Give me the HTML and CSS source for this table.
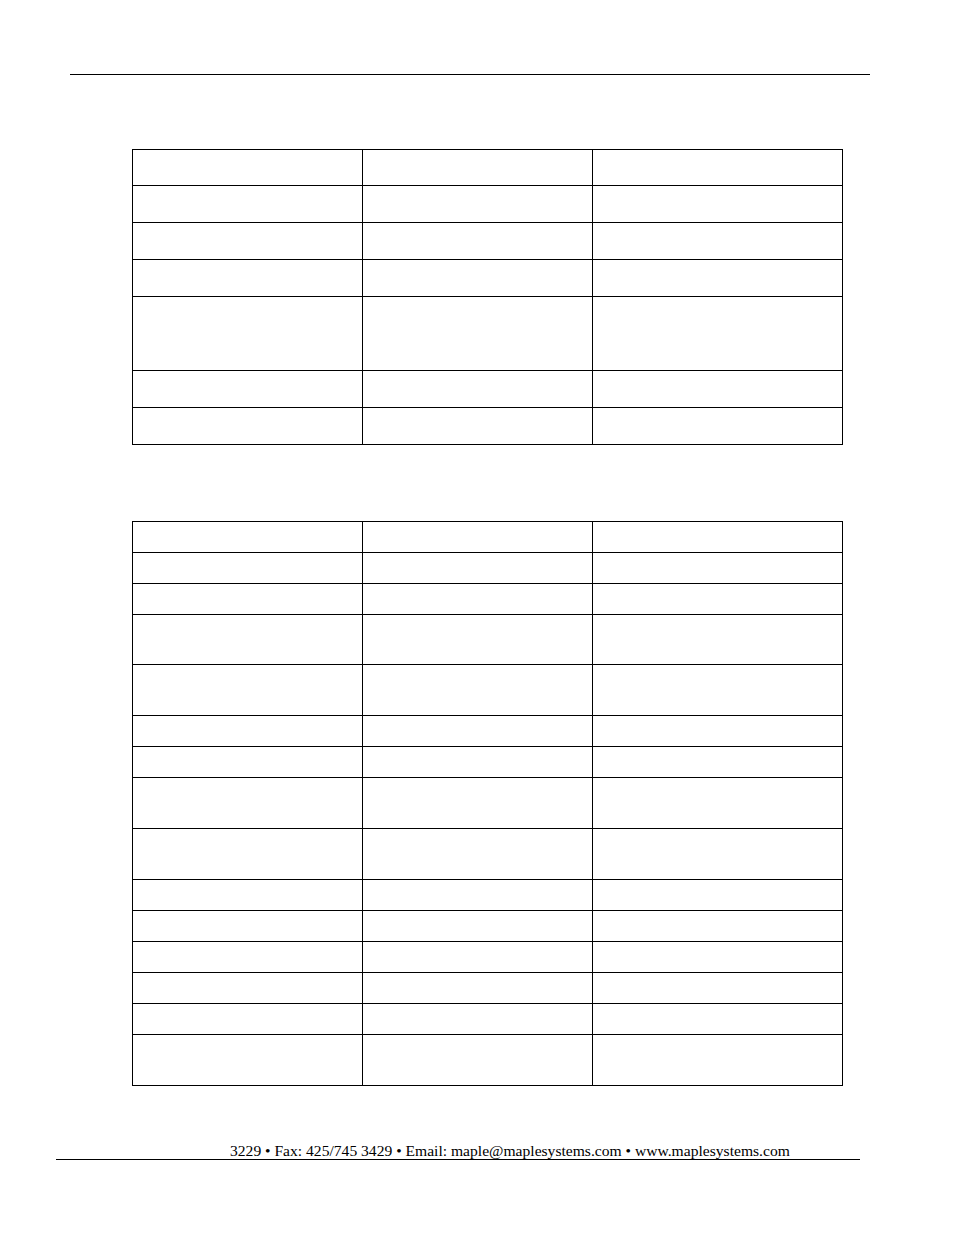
FILE: index.html
```html
<!DOCTYPE html>
<html>
<head>
<meta charset="utf-8">
<link rel="stylesheet" href="styles.css">
</head>
<body>
<div class="page">
  <div class="rule-top"></div>
  <table class="grid grid-one">
    <colgroup><col class="c1"><col class="c2"><col class="c3"></colgroup>
    <tr class="r36"><td></td><td></td><td></td></tr>
    <tr class="r37"><td></td><td></td><td></td></tr>
    <tr class="r37"><td></td><td></td><td></td></tr>
    <tr class="r37"><td></td><td></td><td></td></tr>
    <tr class="r74"><td></td><td></td><td></td></tr>
    <tr class="r37"><td></td><td></td><td></td></tr>
    <tr class="r37"><td></td><td></td><td></td></tr>
  </table>
  <table class="grid grid-two">
    <colgroup><col class="c1"><col class="c2"><col class="c3"></colgroup>
    <tr class="r31"><td></td><td></td><td></td></tr>
    <tr class="r31"><td></td><td></td><td></td></tr>
    <tr class="r31"><td></td><td></td><td></td></tr>
    <tr class="r50"><td></td><td></td><td></td></tr>
    <tr class="r51"><td></td><td></td><td></td></tr>
    <tr class="r31"><td></td><td></td><td></td></tr>
    <tr class="r31"><td></td><td></td><td></td></tr>
    <tr class="r51"><td></td><td></td><td></td></tr>
    <tr class="r51"><td></td><td></td><td></td></tr>
    <tr class="r31"><td></td><td></td><td></td></tr>
    <tr class="r31"><td></td><td></td><td></td></tr>
    <tr class="r31"><td></td><td></td><td></td></tr>
    <tr class="r31"><td></td><td></td><td></td></tr>
    <tr class="r31"><td></td><td></td><td></td></tr>
    <tr class="r51"><td></td><td></td><td></td></tr>
  </table>
  <div class="footer">3229 • Fax: 425/745 3429 • Email: maple@maplesystems.com • www.maplesystems.com</div>
</div>
</body>
</html>
```
FILE: styles.css
```css
html, body {
  margin: 0;
  padding: 0;
  background: #ffffff;
}
.page {
  width: 954px;
  height: 1235px;
  padding-top: 74px;
  box-sizing: border-box;
  font-family: "Liberation Serif", "Times New Roman", serif;
  color: #000;
}
.rule-top {
  margin-left: 70px;
  width: 800px;
  border-top: 1px solid #000;
}
.grid {
  border-collapse: collapse;
  table-layout: fixed;
  width: 710px;
  margin-left: 132px;
}
.grid-one { margin-top: 74px; }
.grid-two { margin-top: 76px; }
.grid td {
  border: 1px solid #000;
  padding: 0;
}
.c1 { width: 230px; }
.c2 { width: 230px; }
.c3 { width: 250px; }
.r31 td { height: 30px; }
.r36 td { height: 35px; }
.r37 td { height: 36px; }
.r50 td { height: 49px; }
.r51 td { height: 50px; }
.r74 td { height: 73px; }
.footer {
  margin-top: 56px;
  margin-left: 56px;
  width: 804px;
  padding-left: 174px;
  box-sizing: border-box;
  border-bottom: 1px solid #000;
  font-size: 15.6px;
  line-height: 17px;
  white-space: nowrap;
}
```
